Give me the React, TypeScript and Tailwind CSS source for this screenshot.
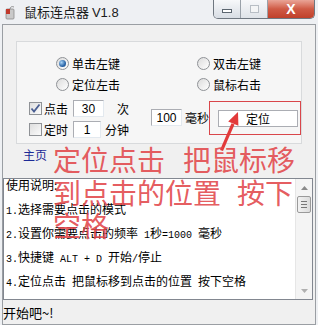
import type { ReactNode } from "react";

const ui = "font-['Noto_Sans_CJK_SC',sans-serif]";

function M({ children }: { children: ReactNode }) {
  // latin in SimSun is half-width, Liberation Mono at 10px gets the same 6px advance
  return <span className="font-['Liberation_Mono',monospace] text-[10px] leading-none">{children}</span>;
}

function Line({ children }: { children: ReactNode }) {
  return <div className="h-[24px] leading-[24px] whitespace-pre">{children}</div>;
}

function Radio({ checked, label }: { checked?: boolean; label: string }) {
  return (
    <div className="flex items-center gap-[3px] h-[21px]">
      <div className="w-[13px] h-[13px] rounded-full border border-[#8f9296] bg-gradient-to-br from-[#dcdcdc] to-[#ffffff] flex items-center justify-center">
        {checked && (
          <div className="w-[7px] h-[7px] rounded-full bg-[radial-gradient(circle_at_35%_35%,#a9d4f7,#2b66a8_60%,#1b4a86)]" />
        )}
      </div>
      <span className="text-[12px] leading-none text-black">{label}</span>
    </div>
  );
}

function Check({ checked, label }: { checked?: boolean; label: string }) {
  return (
    <div className="flex items-center gap-[2px]">
      <div className="w-[13px] h-[13px] border border-[#8f9296] bg-gradient-to-br from-[#dedede] to-[#fbfbfb] flex items-center justify-center">
        {checked && (
          <svg width="11" height="11" viewBox="0 0 11 11">
            <path d="M1.5 5.5 L4 8.5 L9.5 1.5" fill="none" stroke="#4a5e92" strokeWidth="1.8" />
          </svg>
        )}
      </div>
      <span className="text-[12px] leading-none">{label}</span>
    </div>
  );
}

function NumBox({ value, w }: { value: string; w: string }) {
  return (
    <div
      className={`${w} h-[17px] bg-white border border-[#abadb3] border-r-[#e3e9ef] border-b-[#e3e9ef] flex items-center justify-center font-['Liberation_Sans',sans-serif] text-[12px] leading-none`}
    >
      {value}
    </div>
  );
}

export default function App() {
  return (
    <div className={`${ui} w-[318px] h-[325px] overflow-hidden relative bg-[#eef0f3] text-black`}>
      {/* title bar */}
      <div className="h-[24px] flex items-start">
        <svg className="ml-[5px] mt-[6px]" width="11" height="14" viewBox="0 0 11 14">
          <rect x="1" y="3" width="8" height="10" rx="1" fill="#c9c9c9" stroke="#8a8a8a" strokeWidth="0.8" />
          <rect x="1" y="3" width="4" height="5" fill="#c0392b" />
          <path d="M5 3 C5 1 7 0 9 1" fill="none" stroke="#7a7a7a" strokeWidth="0.8" />
        </svg>
        <span className="ml-[8px] mt-[3px] text-[13px] leading-[18px] text-[#1b1b1b]">
          鼠标连点器 <span className="font-['Liberation_Sans',sans-serif]">V1.8</span>
        </span>
        <div className="ml-auto mr-[3px] flex h-[19px] border border-t-0 border-[#6f7780] rounded-b-[5px] overflow-hidden">
          <div className="w-[27px] bg-gradient-to-b from-[#f7f8fa] to-[#d8dde4] border-r border-[#9aa1a9] flex items-center justify-center">
            <div className="w-[10px] h-[4px] mt-[4px] border border-[#5c6670] bg-white" />
          </div>
          <div className="w-[27px] bg-gradient-to-b from-[#f7f8fa] to-[#dfe3e8] border-r border-[#9aa1a9] flex items-center justify-center">
            <div className="w-[9px] h-[8px] border border-[#b8bec5] bg-[#f4f5f6]" />
          </div>
          <div className="w-[46px] bg-gradient-to-b from-[#e9a497] via-[#cf5a45] to-[#c0402a] flex items-center justify-center">
            <span className="font-['Liberation_Sans',sans-serif] font-bold text-[14px] leading-none text-white">X</span>
          </div>
        </div>
      </div>

      {/* client area */}
      <div className="ml-[2px] w-[314px] h-[301px] border border-[#9a9ea3] bg-[#f0f0f0] flex flex-col">
        <div className="ml-[13px] mt-[16px] w-[286px] h-[103px] border border-[#d8dadc] bg-[#f6f6f6]">
          <div className="pt-[11px] pl-[39px] grid grid-cols-[141px_auto]">
            <Radio checked label="单击左键" />
            <Radio label="双击左键" />
            <Radio label="定位左击" />
            <Radio label="鼠标右击" />
          </div>
          <div className="mt-[3px] pl-[12px] flex items-start">
            <div className="flex flex-col">
              <div className="h-[21px] flex items-center">
                <Check checked label="点击" />
                <div className="ml-[5px]">
                  <NumBox value="30" w="w-[31px]" />
                </div>
                <span className="ml-[13px] text-[12px] leading-none">次</span>
              </div>
              <div className="h-[21px] flex items-center">
                <Check label="定时" />
                <div className="ml-[5px]">
                  <NumBox value="1" w="w-[28px]" />
                </div>
                <span className="ml-[4px] text-[12px] leading-none">分钟</span>
              </div>
            </div>
            <div className="ml-[22px] mt-[11px] flex items-center">
              <NumBox value="100" w="w-[31px]" />
              <span className="ml-[3px] text-[12px] leading-none">毫秒</span>
            </div>
            <div className="ml-[9px] mt-[12px] w-[80px] h-[17px] bg-white border border-[#abadb3] flex items-center justify-center text-[12px] leading-none">
              定位
            </div>
          </div>
        </div>

        <div className="ml-[20px] mt-[3px] h-[16px] leading-[16px] text-[12px] text-[#1c2a96]">主页</div>

        <div className="mt-[15px] w-[310px] h-[122px] border border-[#828790] bg-white flex overflow-hidden">
          <div className="flex-1 overflow-hidden pl-[2px] -mt-[6px] text-[12px]">
            <Line>使用说明:</Line>
            <Line>
              <M>1.</M>选择需要点击的模式
            </Line>
            <Line>
              <M>2.</M>设置你需要点击的频率<M> 1</M>秒<M>=1000 </M>毫秒
            </Line>
            <Line>
              <M>3.</M>快捷键<M> ALT + D </M>开始<M>/</M>停止
            </Line>
            <Line>
              <M>4.</M>定位点击<M> </M>把鼠标移到点击的位置<M> </M>按下空格
            </Line>
          </div>
          {/* scrollbar */}
          <div className="w-[17px] bg-[#f4f4f4] border-l border-[#e6e6e6] flex flex-col items-center">
            <div className="h-[17px] flex items-center justify-center">
              <svg width="7" height="4" viewBox="0 0 7 4">
                <path d="M0 4 L3.5 0 L7 4 Z" fill="#8a8a8a" />
              </svg>
            </div>
            <div className="w-[14px] h-[17px] rounded-[2px] border border-[#9a9a9a] bg-gradient-to-r from-[#f2f2f2] to-[#dcdcdc] flex flex-col items-center justify-center gap-[2px]">
              <div className="w-[6px] h-px bg-[#777]" />
              <div className="w-[6px] h-px bg-[#777]" />
              <div className="w-[6px] h-px bg-[#777]" />
            </div>
            <div className="flex-1" />
            <div className="h-[17px] flex items-center justify-center">
              <svg width="7" height="4" viewBox="0 0 7 4">
                <path d="M0 0 L3.5 4 L7 0 Z" fill="#b0b0b0" />
              </svg>
            </div>
          </div>
        </div>

        <div className="h-[24px] flex items-center text-[13px] leading-none">开始吧~!</div>
      </div>

      {/* red annotation */}
      <div className="absolute left-[209px] top-[101px] w-[92px] h-[34px] border-[1.5px] border-[#d9464a]" />
      <svg className="absolute left-0 top-0 pointer-events-none" width="318" height="325" viewBox="0 0 318 325">
        <polygon points="220,150 223,151 234.5,124.5 231.5,123.3" fill="#e23a3a" />
        <polygon points="238,112 238.4,125.8 228.2,121.6" fill="#e23a3a" />
      </svg>
      <div className="absolute left-[53px] top-[143px] text-[28px] leading-[33px] text-[#e2474b]/90 whitespace-pre pointer-events-none">
        <div className="flex gap-[18px]">
          <span>定位点击</span>
          <span>把鼠标移</span>
        </div>
        <div className="flex gap-[16px]">
          <span>到点击的位置</span>
          <span>按下</span>
        </div>
        <div>空格</div>
      </div>
    </div>
  );
}
